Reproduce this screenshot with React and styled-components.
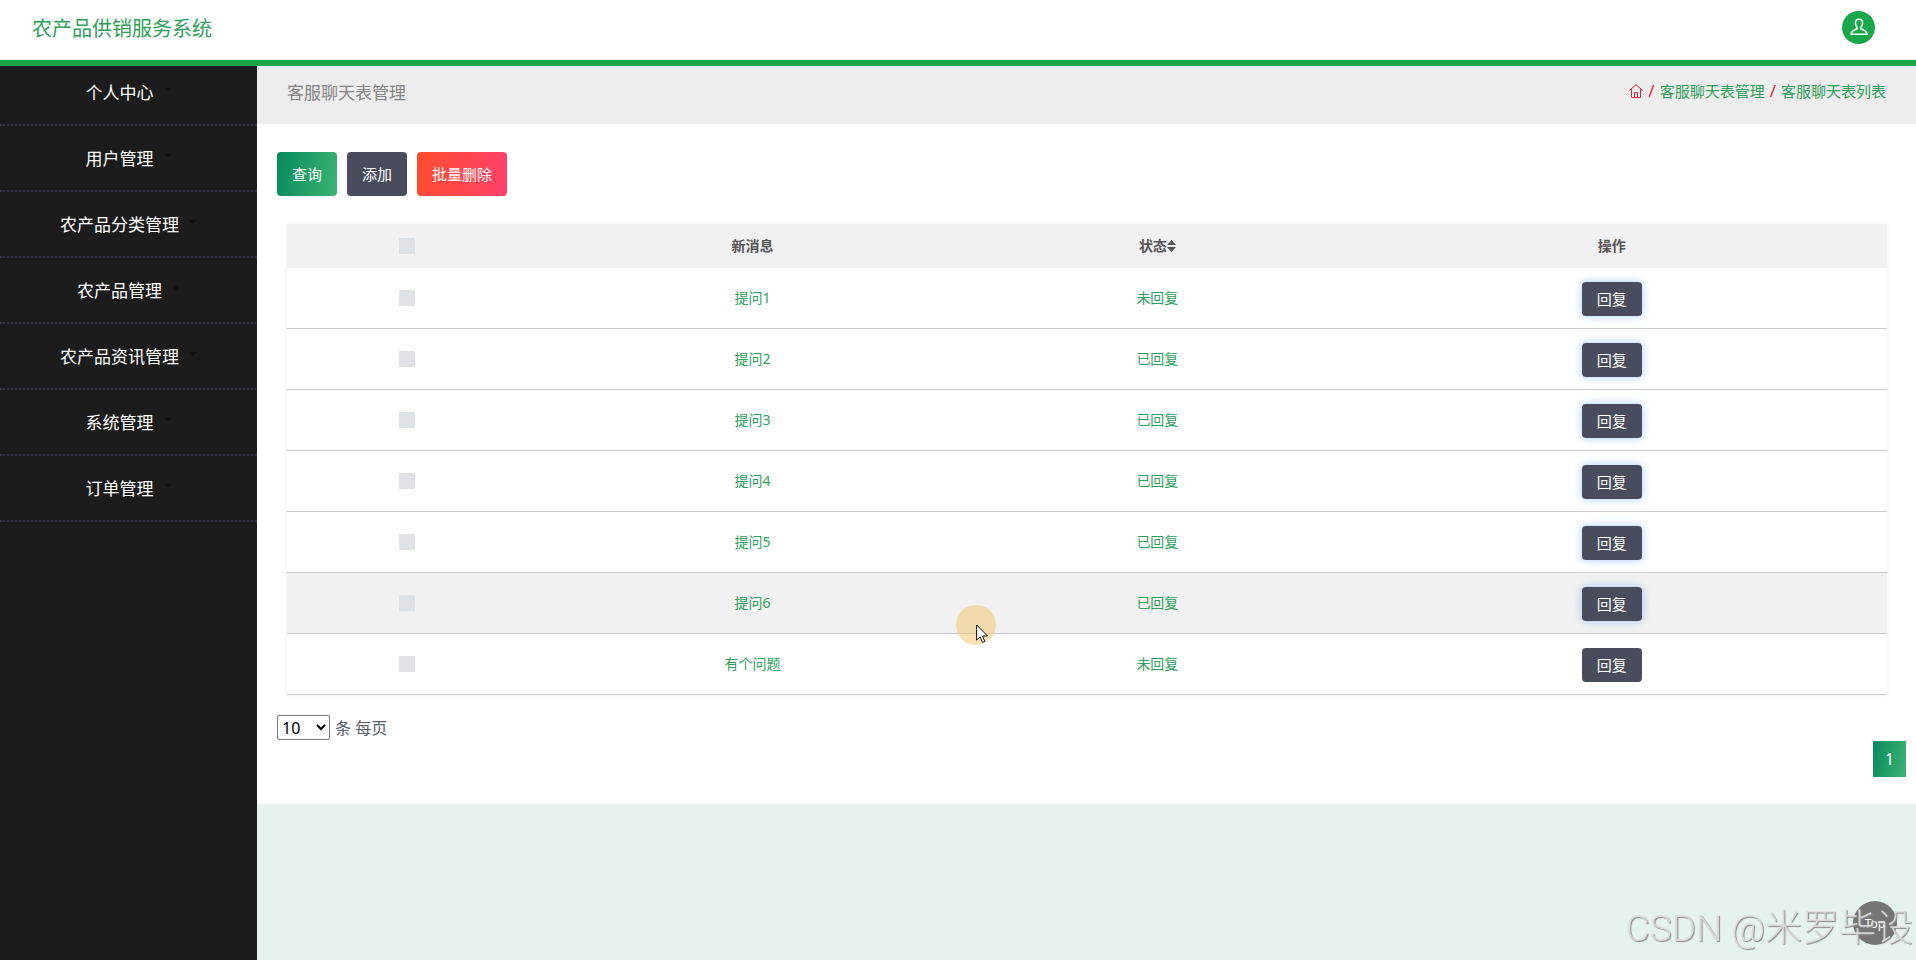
import React, { useState } from "react";
import styled, { createGlobalStyle } from "styled-components";

const GlobalStyle = createGlobalStyle`
  *, *::before, *::after { box-sizing: border-box; }
  body {
    margin: 0;
    background: #e6f3ec;
    color: #56606b;
    font-family: "Noto Sans", "Noto Sans CJK SC", sans-serif;
    font-size: 16px;
    line-height: 24px;
  }
  a { color: inherit; text-decoration: none; }
`;

const Page = styled.div`
  min-height: 100vh;
  display: flex;
  flex-direction: column;
`;

const Header = styled.header`
  position: relative;
  z-index: 1;
  height: 60px;
  padding: 0 41px 6px 32px;
  display: flex;
  align-items: center;
  justify-content: space-between;
  background: #fff;
  box-shadow: 0 6px 0 #18a64c;
`;

const Brand = styled.a`
  padding-top: 4px;
  color: #2e9f5b;
  font-size: 20px;
`;

const UserButton = styled.button`
  width: 33px;
  height: 33px;
  padding: 0;
  display: grid;
  place-items: center;
  border: 0;
  border-radius: 50%;
  background: #18a84a;
  color: #fff;
`;

const Body = styled.div`
  flex: 1;
  display: flex;
`;

const Sidebar = styled.nav`
  flex: 0 0 257px;
  background: #1c1c1c;
`;

const Menu = styled.ul`
  margin: 0;
  padding: 0;
  list-style: none;
`;

const MenuItem = styled.li`
  border-bottom: 2px dotted #32343f;
`;

const MenuLink = styled.a`
  height: 64px;
  padding-top: 2px;
  display: flex;
  align-items: center;
  justify-content: center;
  gap: 10px;
  color: #fff;
  font-size: 17px;

  &::after {
    content: "";
    margin-bottom: 6px;
    border: 4px solid transparent;
    border-top-color: #111;
    border-bottom: 0;
  }
`;

const Main = styled.main`
  flex: 1;
  min-width: 0;
`;

const TitleBar = styled.div`
  height: 64px;
  padding: 2px 30px 0;
  display: flex;
  align-items: center;
  justify-content: space-between;
  background: #ededed;
`;

const Title = styled.h1`
  margin: 0;
  color: #858585;
  font-size: 17px;
  font-weight: 400;
`;

const Breadcrumb = styled.nav`
  padding-bottom: 4px;
  display: flex;
  align-items: center;
  gap: 5px;
  color: #e0243a;
  font-size: 15px;

  svg { display: block; }
`;

const Slash = styled.span`
  font-size: 17px;
`;

const Crumb = styled.a`
  color: #2e9f5b;
`;

const Panel = styled.section`
  padding: 28px 10px 27px 20px;
  background: #fff;
`;

const Toolbar = styled.div`
  display: flex;
  gap: 10px;
`;

const fills = {
  green: "linear-gradient(100deg, #078a5f, #3cb371)",
  dark: "#484c5d",
  red: "linear-gradient(100deg, #ff4d2d, #ff416c)",
};

const Button = styled.button`
  height: ${(p) => (p.$small ? "34px" : "44px")};
  padding: 0 15px;
  border: 0;
  border-radius: 4px;
  background: ${(p) => fills[p.$fill]};
  box-shadow: ${(p) => (p.$glow ? "0 0 8px rgba(30, 130, 255, 0.4)" : "none")};
  color: #fff;
  font-family: inherit;
  font-size: 15px;
  line-height: 24px;
`;

const Table = styled.table`
  width: calc(100% - 29px);
  margin: 28px 19px 20px 10px;
  border-collapse: separate;
  border-spacing: 0;
  table-layout: fixed;
  box-shadow: 0 0 6px rgba(0, 0, 0, 0.06);
  font-size: 14px;
  text-align: center;
`;

const Th = styled.th`
  width: ${(p) => p.$width};
  height: 44px;
  padding: 0;
  background: #f1f1f1;
  color: #555;
  font-weight: 600;
`;

const ThLabel = styled.span`
  display: inline-flex;
  align-items: center;
`;

const Row = styled.tr`
  background: ${(p) => (p.$active ? "#f1f1f1" : "#fff")};
`;

const Td = styled.td`
  height: 61px;
  padding: 0;
  border-bottom: 1px solid #c8cacc;
  color: #2e9f5b;
`;

const ActionTd = styled(Td)`
  padding-top: 2px;
`;

const Check = styled.input`
  appearance: none;
  display: block;
  width: 16px;
  height: 16px;
  margin: 0 auto;
  background: ${(p) => (p.checked ? "#18a64c" : "#dee1e5")};
`;

const PageSize = styled.label`
  display: flex;
  align-items: center;
  gap: 5px;
  height: 26px;
`;

const Select = styled.select`
  align-self: flex-start;
  width: 53px;
  height: 25px;
  border: 1px solid #767676;
  border-radius: 2px;
  background: #fff;
  color: #000;
  font-family: inherit;
  font-size: 16px;
`;

const Pager = styled.nav`
  display: flex;
  justify-content: flex-end;
`;

const PageButton = styled.button`
  width: 33px;
  height: 36px;
  padding: 0;
  border: 0;
  background: ${fills.green};
  color: #fff;
  font-family: inherit;
  font-size: 16px;
`;

const TopButton = styled.button`
  position: fixed;
  right: 19px;
  bottom: 15px;
  width: 44px;
  height: 44px;
  padding: 0;
  border: 0;
  border-radius: 50%;
  background: #757575;
  color: #fff;
  font-family: inherit;
  font-size: 12px;
`;

const Watermark = styled.div`
  position: fixed;
  right: 3px;
  bottom: 4px;
  color: rgba(222, 222, 222, 0.9);
  font-family: Roboto, "Noto Sans CJK SC", sans-serif;
  font-size: 37px;
  font-weight: 300;
  line-height: 54px;
  text-shadow: 1px 1px 1px #8a8a8a;
  white-space: nowrap;
  pointer-events: none;
`;

const Pointer = styled.div`
  position: fixed;
  left: 956px;
  top: 605px;
  width: 40px;
  height: 40px;
  border-radius: 50%;
  background: rgba(243, 190, 92, 0.45);
  pointer-events: none;

  svg { position: absolute; left: 20px; top: 19px; }
`;

const UserIcon = () => (
  <svg width="18" height="18" viewBox="0 0 18 18" fill="none" stroke="currentColor" strokeWidth="1.5" strokeLinejoin="round">
    <path d="M9 1.2c-2.3 0-3.6 1.700-3.600 3.900 0 1.700.7 3.300 1.900 4.200v1.500c-2.600.8-5.700 1.900-6.300 5.400h16c-.6-3.500-3.700-4.600-6.300-5.400V9.300c1.200-.9 1.900-2.500 1.900-4.200C12.600 2.900 11.300 1.200 9 1.200z" />
  </svg>
);

const HomeIcon = () => (
  <svg width="14" height="14" viewBox="0 0 14 14" fill="none" stroke="currentColor" strokeWidth="1">
    <path d="M.4 6.500 7 .7l6.600 5.800M2.500 5v8.500h9V5M5.500 13.500V8.500h3v5" />
  </svg>
);

const SortIcon = () => (
  <svg width="9" height="12" viewBox="0 0 9 12" fill="currentColor" aria-hidden="true">
    <path d="M4.500 0 9 5H0zM4.500 12 0 7h9z" />
  </svg>
);

const CursorIcon = () => (
  <svg width="13" height="20" viewBox="0 0 13 20" fill="#fff" stroke="#111" strokeWidth="1">
    <path d="M.6 1v15.200l3.500-3.400 2.300 5.600 2.400-1-2.300-5.400h5z" />
  </svg>
);

const menu = ["个人中心", "用户管理", "农产品分类管理", "农产品管理", "农产品资讯管理", "系统管理", "订单管理"];

const messages = [
  { text: "提问1", status: "未回复", glow: true },
  { text: "提问2", status: "已回复", glow: true },
  { text: "提问3", status: "已回复", glow: true },
  { text: "提问4", status: "已回复", glow: true },
  { text: "提问5", status: "已回复", glow: true },
  { text: "提问6", status: "已回复", glow: true, active: true },
  { text: "有个问题", status: "未回复" },
];

export default function App() {
  const [selected, setSelected] = useState([]);
  const allSelected = selected.length === messages.length;
  const toggle = (text) =>
    setSelected((s) => (s.includes(text) ? s.filter((t) => t !== text) : [...s, text]));

  return (
    <Page>
      <GlobalStyle />
      <Header>
        <Brand href="#">农产品供销服务系统</Brand>
        <UserButton aria-label="个人中心"><UserIcon /></UserButton>
      </Header>
      <Body>
        <Sidebar>
          <Menu>
            {menu.map((name) => (
              <MenuItem key={name}><MenuLink href="#">{name}</MenuLink></MenuItem>
            ))}
          </Menu>
        </Sidebar>
        <Main>
          <TitleBar>
            <Title>客服聊天表管理</Title>
            <Breadcrumb>
              <a href="#" aria-label="首页"><HomeIcon /></a>
              <Slash>/</Slash>
              <Crumb href="#">客服聊天表管理</Crumb>
              <Slash>/</Slash>
              <Crumb href="#">客服聊天表列表</Crumb>
            </Breadcrumb>
          </TitleBar>
          <Panel>
            <Toolbar>
              <Button $fill="green">查询</Button>
              <Button $fill="dark">添加</Button>
              <Button $fill="red">批量删除</Button>
            </Toolbar>
            <Table>
              <thead>
                <tr>
                  <Th $width="15%">
                    <Check
                      type="checkbox"
                      aria-label="全选"
                      checked={allSelected}
                      onChange={() => setSelected(allSelected ? [] : messages.map((m) => m.text))}
                    />
                  </Th>
                  <Th $width="28.2%">新消息</Th>
                  <Th $width="22.4%"><ThLabel>状态<SortIcon /></ThLabel></Th>
                  <Th $width="34.4%">操作</Th>
                </tr>
              </thead>
              <tbody>
                {messages.map((m) => (
                  <Row key={m.text} $active={m.active}>
                    <Td>
                      <Check
                        type="checkbox"
                        aria-label={m.text}
                        checked={selected.includes(m.text)}
                        onChange={() => toggle(m.text)}
                      />
                    </Td>
                    <Td>{m.text}</Td>
                    <Td>{m.status}</Td>
                    <ActionTd><Button $fill="dark" $small $glow={m.glow}>回复</Button></ActionTd>
                  </Row>
                ))}
              </tbody>
            </Table>
            <PageSize>
              <Select defaultValue="10">
                <option>10</option>
                <option>25</option>
                <option>50</option>
              </Select>
              条 每页
            </PageSize>
            <Pager aria-label="分页">
              <PageButton>1</PageButton>
            </Pager>
          </Panel>
        </Main>
      </Body>
      <TopButton>Top</TopButton>
      <Watermark>CSDN @米罗毕设</Watermark>
      <Pointer><CursorIcon /></Pointer>
    </Page>
  );
}
